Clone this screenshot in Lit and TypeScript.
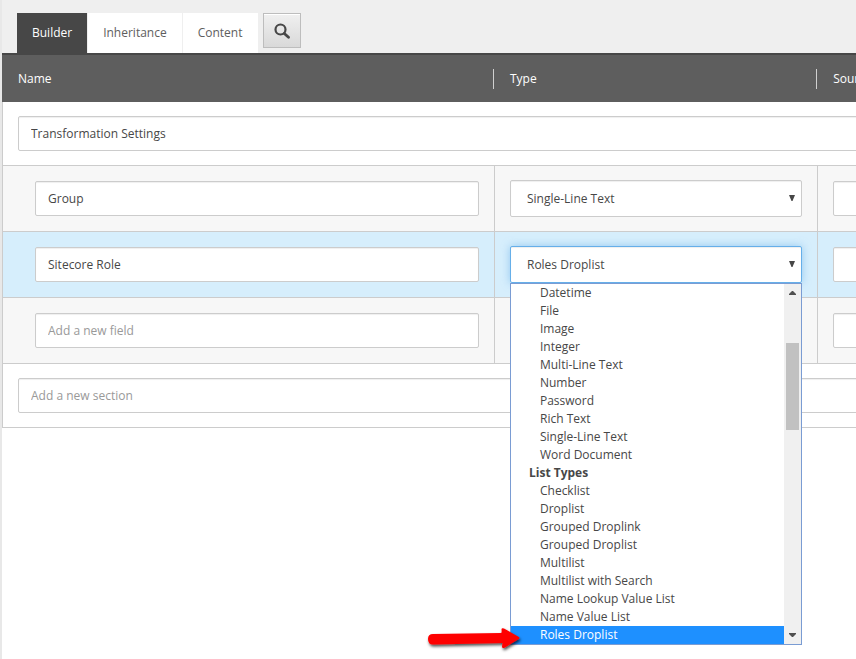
import { LitElement, html, css } from "lit";
import { customElement, state } from "lit/decorators.js";

interface TypeGroup {
  label: string;
  types: string[];
}

const TYPE_GROUPS: TypeGroup[] = [
  {
    label: "Simple Types",
    types: ["Datetime", "File", "Image", "Integer", "Multi-Line Text", "Number", "Password", "Rich Text", "Single-Line Text", "Word Document"],
  },
  {
    label: "List Types",
    types: ["Checklist", "Droplist", "Grouped Droplink", "Grouped Droplist", "Multilist", "Multilist with Search", "Name Lookup Value List", "Name Value List", "Roles Droplist"],
  },
];

@customElement("app-root")
export class AppRoot extends LitElement {
  @state() private selectedType = "Roles Droplist";

  static styles = css`
    :host {
      display: block;
      box-sizing: border-box;
      min-height: 100vh;
      overflow: hidden;
      border-left: 2px solid #e8e8e8;
      background: #fff;
      color: #474747;
      font: 12px/18px "Open Sans", sans-serif;
    }
    * {
      box-sizing: border-box;
    }
    .tabs {
      display: flex;
      align-items: flex-start;
      padding: 13px 15px 0;
      background: #efefef;
    }
    .tab {
      height: 40px;
      margin: 0 1px 0 0;
      padding: 0 15px;
      border: 0;
      background: #fff;
      color: #5e5e5e;
      font: inherit;
    }
    .tab.active {
      background: #474747;
      color: #fff;
    }
    .search {
      display: flex;
      align-items: center;
      justify-content: center;
      width: 38px;
      height: 35px;
      margin-left: 4px;
      padding: 0;
      border: 1px solid #bdbdbd;
      background: linear-gradient(#f0f0f0, #d9d9d9);
      box-shadow: inset 0 1px #fff;
    }
    .fields {
      width: 152%;
      table-layout: fixed;
      border-collapse: separate;
      border-spacing: 0;
    }
    .col-name {
      width: 37.9%;
    }
    .col-type {
      width: 24.9%;
    }
    th {
      padding: 14px 0 13px 16px;
      border-top: 2px solid #474747;
      background: #5e5e5e;
      color: #fff;
      font-weight: 400;
      text-align: left;
    }
    .head {
      display: block;
      height: 20px;
      border-right: 1px solid #d0d0d0;
      line-height: 20px;
    }
    td {
      padding: 14px 15px;
      border-bottom: 1px solid #ccc;
      border-left: 1px solid #ccc;
      vertical-align: middle;
    }
    .field td {
      background: #f7f7f7;
    }
    .field td:first-child {
      padding-left: 32px;
    }
    .field.current td {
      background: #d6eefc;
    }
    .text,
    .select {
      display: block;
      width: 100%;
      margin: 0;
      border: 1px solid #ccc;
      border-radius: 2px;
      outline: 0;
      background: #fff;
      color: #474747;
      box-shadow: inset 0 1px 1px #0001;
      font: inherit;
    }
    .text {
      height: 35px;
      padding: 0 12px;
    }
    .text::placeholder {
      color: #999;
      opacity: 1;
    }
    .select {
      appearance: none;
      height: 37px;
      padding: 0 16px;
    }
    .picker {
      position: relative;
    }
    .arrow {
      position: absolute;
      top: 15px;
      right: 7px;
      pointer-events: none;
    }
    .picker.open .select {
      border-color: #66afe9;
      box-shadow: inset 0 1px 1px #0001, 0 0 8px #66afe999;
    }
    .popup {
      position: absolute;
      z-index: 1;
      top: 100%;
      left: 0;
      display: flex;
      width: 100%;
      border: 1px solid #7a9cd3;
      background: #fff;
    }
    .options {
      flex: 1;
    }
    .option {
      padding-left: 29px;
      cursor: default;
    }
    .option.selected {
      background: #1e90ff;
      color: #fff;
    }
    .group-label {
      padding-left: 18px;
      font-weight: 700;
    }
    .scrollbar {
      display: flex;
      flex-direction: column;
      justify-content: space-between;
      width: 17px;
      padding: 7px 2px;
      background: #f0f0f0;
    }
    .scroll-arrow {
      display: block;
      margin: 0 auto;
    }
    .thumb {
      height: 87px;
      margin: 0 0 156px;
      background: #c1c1c1;
    }
    .pointer {
      position: absolute;
      right: calc(100% - 16px);
      bottom: -12px;
      pointer-events: none;
    }
  `;

  private picker(field: string, value: string, open = false) {
    return html`<div class="picker ${open ? "open" : ""}">
      <select class="select" aria-label="${field} type">
        ${TYPE_GROUPS.map(
          (g) => html`<optgroup label=${g.label}>
            ${g.types.map((t) => html`<option ?selected=${t === value}>${t}</option>`)}
          </optgroup>`
        )}
      </select>
      <svg class="arrow" width="6" height="6" viewBox="0 0 6 6" aria-hidden="true"><path fill="#474747" d="M0 0h6L3.5 6h-1z" /></svg>
      ${open ? this.popup() : ""}
    </div>`;
  }

  private popup() {
    return html`<div class="popup">
      <div class="options" role="listbox" aria-label="Field types">
        ${TYPE_GROUPS.map(
          (g, i) => html`
            ${i > 0 ? html`<div class="group-label">${g.label}</div>` : ""}
            ${g.types.map(
              (t) => html`<div
                class="option ${t === this.selectedType ? "selected" : ""}"
                role="option"
                aria-selected=${t === this.selectedType}
                @click=${() => (this.selectedType = t)}
              >${t}</div>`
            )}
          `
        )}
      </div>
      <div class="scrollbar">
        <svg class="scroll-arrow" width="7" height="4" viewBox="0 0 7 4"><path fill="#505050" d="M3 0h1l3 3v1H0V3z" /></svg>
        <div class="thumb"></div>
        <svg class="scroll-arrow" width="7" height="4" viewBox="0 0 7 4"><path fill="#505050" d="M0 0h7v1L4 4H3L0 1z" /></svg>
      </div>
      ${this.pointer()}
    </div>`;
  }

  /* Red callout arrow aimed at the selected option. */
  private pointer() {
    return html`<svg class="pointer" width="104" height="32" viewBox="0 0 104 32" aria-hidden="true">
      <defs>
        <filter id="shade" x="-10%" y="-30%" width="120%" height="170%">
          <feDropShadow dx="1" dy="2" stdDeviation="1.5" flood-color="#000" flood-opacity="0.7" />
        </filter>
      </defs>
      <path
        filter="url(#shade)"
        fill="#fe0000"
        d="M10 10 L78 9 Q79 9 78.500 5.500 Q78.500 3.500 81 4.500 L95 12.500 Q98 14 95 15.500 L82 23.500 Q79 25 79 22.500 L79.500 19 L10 20.500 Q5 20.500 5 15 Q5 10 10 10Z"
      />
    </svg>`;
  }

  render() {
    return html`
      <nav class="tabs">
        <button class="tab active">Builder</button>
        <button class="tab">Inheritance</button>
        <button class="tab">Content</button>
        <button class="search" aria-label="Search">
          <svg width="16" height="16" viewBox="0 0 16 16" fill="none" stroke="#474747">
            <circle cx="6.5" cy="6.5" r="5" stroke-width="2.2" />
            <path d="M10.3 10.5l4.200 3.800" stroke-width="2.8" stroke-linecap="round" />
          </svg>
        </button>
      </nav>
      <table class="fields">
        <colgroup>
          <col class="col-name" />
          <col class="col-type" />
          <col />
        </colgroup>
        <thead>
          <tr>
            <th><span class="head">Name</span></th>
            <th><span class="head">Type</span></th>
            <th><span class="head">Source</span></th>
          </tr>
        </thead>
        <tbody>
          <tr>
            <td colspan="3"><input class="text" aria-label="Section name" .value=${"Transformation Settings"} /></td>
          </tr>
          <tr class="field">
            <td><input class="text" aria-label="Field name" .value=${"Group"} /></td>
            <td>${this.picker("Group", "Single-Line Text")}</td>
            <td><input class="text" aria-label="Group source" /></td>
          </tr>
          <tr class="field current">
            <td><input class="text" aria-label="Field name" .value=${"Sitecore Role"} /></td>
            <td>${this.picker("Sitecore Role", this.selectedType, true)}</td>
            <td><input class="text" aria-label="Sitecore Role source" /></td>
          </tr>
          <tr class="field">
            <td><input class="text" aria-label="New field" placeholder="Add a new field" /></td>
            <td>${this.picker("New field", "Single-Line Text")}</td>
            <td><input class="text" aria-label="New field source" /></td>
          </tr>
          <tr>
            <td colspan="3"><input class="text" aria-label="New section" placeholder="Add a new section" /></td>
          </tr>
        </tbody>
      </table>
    `;
  }
}
